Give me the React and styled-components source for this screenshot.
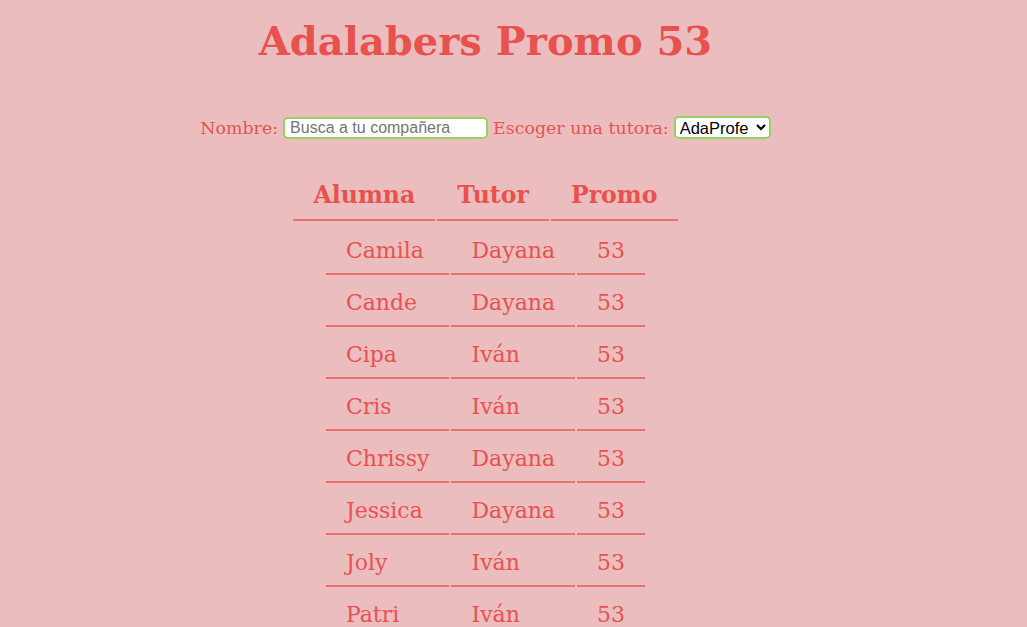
import styled, { createGlobalStyle } from 'styled-components'

const RED = '#e8524e'
const LINE = '#e8716c'
const GREEN = '#93d35f'

const GlobalStyle = createGlobalStyle`
  html, body {
    margin: 0;
    background: #ebbdbe;
  }
  body {
    font-family: "DejaVu Serif", Georgia, serif;
    color: ${RED};
  }
`

const Page = styled.div`
  width: 971px;
  text-align: center;
`

const Title = styled.h1`
  margin: 13px 0 0;
  font-size: 40px;
  line-height: 56px;
  font-weight: bold;
`

const Filters = styled.form`
  margin-top: 47px;
  display: flex;
  justify-content: center;
  align-items: center;
  gap: 5px;
  font-size: 17.4px;
`

const Label = styled.label`
  display: flex;
  align-items: center;
  gap: 5px;
`

const SearchInput = styled.input`
  box-sizing: border-box;
  width: 205px;
  height: 22px;
  padding: 0 5px;
  border: 2px solid ${GREEN};
  border-radius: 5px;
  background: #fff;
  font-family: "Liberation Sans", Arial, sans-serif;
  font-size: 16px;
  color: #000;
  &::placeholder {
    color: #757575;
  }
`

const Select = styled.select`
  box-sizing: border-box;
  width: 97px;
  height: 23px;
  border: 2px solid ${GREEN};
  border-radius: 5px;
  background: #fff;
  font-family: "Liberation Sans", Arial, sans-serif;
  font-size: 16.5px;
  color: #000;
`

const Table = styled.table`
  margin: ${(p) => p.$top}px auto 0;
  border-spacing: 2px;
`

const HeadCell = styled.th`
  padding: 9px 20px 10px;
  font-size: 23.6px;
  font-weight: bold;
  border-bottom: 2px solid ${LINE};
`

const Cell = styled.td`
  padding: 12px 20px 9px;
  height: 27px;
  font-size: 22px;
  text-align: left;
  border-bottom: 2px solid ${LINE};
`

const students = [
  { name: 'Camila', tutor: 'Dayana' },
  { name: 'Cande', tutor: 'Dayana' },
  { name: 'Cipa', tutor: 'Iván' },
  { name: 'Cris', tutor: 'Iván' },
  { name: 'Chrissy', tutor: 'Dayana' },
  { name: 'Jessica', tutor: 'Dayana' },
  { name: 'Joly', tutor: 'Iván' },
  { name: 'Patri', tutor: 'Iván' },
  { name: 'Sofía', tutor: 'Dayana' },
]

const App = () => (
  <Page>
    <GlobalStyle />
    <Title>Adalabers Promo 53</Title>
    <Filters onSubmit={(e) => e.preventDefault()}>
      <Label>
        Nombre:
        <SearchInput type='text' placeholder='Busca a tu compañera' />
      </Label>
      <Label>
        Escoger una tutora:
        <Select defaultValue='AdaProfe'>
          <option>AdaProfe</option>
          <option>Dayana</option>
          <option>Iván</option>
        </Select>
      </Label>
    </Filters>
    <Table $top={31}>
      <thead>
        <tr>
          <HeadCell>Alumna</HeadCell>
          <HeadCell>Tutor</HeadCell>
          <HeadCell>Promo</HeadCell>
        </tr>
      </thead>
    </Table>
    <Table $top={0}>
      <tbody>
        {students.map((s) => (
          <tr key={s.name}>
            <Cell>{s.name}</Cell>
            <Cell>{s.tutor}</Cell>
            <Cell>53</Cell>
          </tr>
        ))}
      </tbody>
    </Table>
  </Page>
)

export default App
